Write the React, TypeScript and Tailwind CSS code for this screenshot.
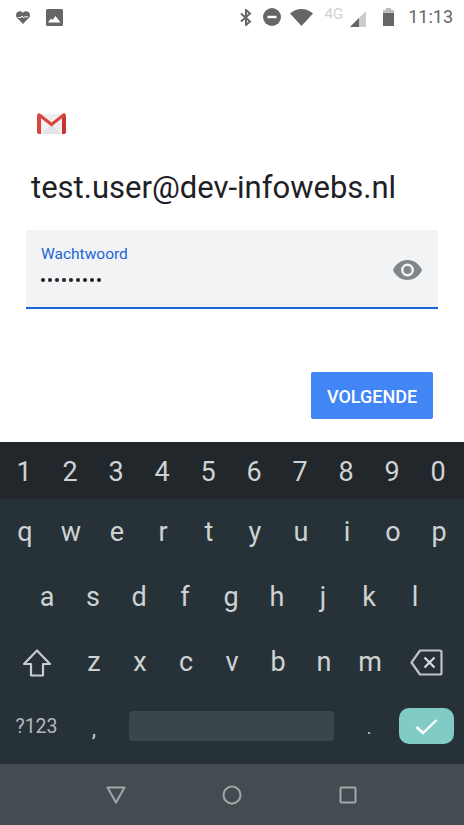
const FONT = "font-['Roboto',sans-serif]";

const rowOne = ['q', 'w', 'e', 'r', 't', 'y', 'u', 'i', 'o', 'p'];
const rowTwo = ['a', 's', 'd', 'f', 'g', 'h', 'j', 'k', 'l'];
const rowThree = ['z', 'x', 'c', 'v', 'b', 'n', 'm'];
const numbers = ['1', '2', '3', '4', '5', '6', '7', '8', '9', '0'];

function StatusBar() {
  return (
    <div className="flex h-[33px] items-center justify-between pl-4 pr-[11px] pt-[1px] text-[#666666]">
      <div className="flex items-center gap-[16px]">
        <svg width="14" height="13" viewBox="0 0 14 13" fill="#666666">
          <path d="M7 13 1 6.8C-.6 5-.2 2 1.8.8 3.6-.3 5.800 0 7 1.800 8.200 0 10.400-.3 12.200.8 14.200 2 14.600 5 13 6.800Z" />
          <path d="M2 6.500h3l1-1.500 1.500 2 1-1.200H12" stroke="#fff" strokeWidth="1" fill="none" />
        </svg>
        <svg width="17" height="17" viewBox="0 0 17 17">
          <rect width="17" height="17" rx="1.500" fill="#666666" />
          <path d="M2 13.500 5 9.500l1.500 1.500L9.500 7l5 6.500Z" fill="#fff" />
        </svg>
      </div>
      <div className="flex items-center">
        <svg width="12" height="17" viewBox="0 0 12 17" fill="none" stroke="#666666" strokeWidth="2">
          <path d="M1 4.500 10 12.500 6 16V1l4 3.500L1 12.500" />
        </svg>
        <svg className="ml-[11px]" width="18" height="18" viewBox="0 0 18 18">
          <circle cx="9" cy="9" r="9" fill="#666666" />
          <rect x="4.500" y="7.800" width="9" height="2.400" fill="#fff" />
        </svg>
        <svg className="ml-[9px]" width="23" height="17" viewBox="0 0 23 17">
          <path d="M0 4.500C3 1.800 7 0 11.500 0S20 1.800 23 4.500L11.500 17Z" fill="#666666" />
        </svg>
        <span className="mb-[6px] ml-[12px] text-[15px] leading-none text-[#d2d2d2]">4G</span>
        <svg className="ml-[7px] mt-[4px]" width="16" height="16" viewBox="0 0 16 16">
          <path d="M0 16 16 0V16Z" fill="#cccccc" />
          <path d="M0 16 9 7V16Z" fill="#666666" />
        </svg>
        <svg className="ml-[17px]" width="11" height="18" viewBox="0 0 11 18">
          <rect x="3" y="0" width="5" height="3" fill="#bdbdbd" />
          <rect x="0" y="2" width="11" height="3" fill="#bdbdbd" />
          <rect x="0" y="5" width="11" height="13" fill="#666666" />
        </svg>
        <span className="ml-[14px] text-[18px] leading-none text-[#666666]">11:13</span>
      </div>
    </div>
  );
}

function GmailLogo() {
  return (
    <svg width="29" height="21" viewBox="0 0 29 21">
      <path d="M1 1h27v19a1 1 0 0 1-1 1H2a1 1 0 0 1-1-1Z" fill="#efefef" />
      <path d="M5 21 14.500 11 24 21Z" fill="#e3e3e3" />
      <path d="M0 2a2 2 0 0 1 3-1.500L14.500 9.500 26 .5A2 2 0 0 1 29 2L14.500 13.500 0 2Z" fill="#d9453c" />
      <path d="M0 2l4 3v16H2a2 2 0 0 1-2-2Z" fill="#d9453c" />
      <path d="M29 2l-4 3v16h2a2 2 0 0 0 2-2Z" fill="#c5362e" />
    </svg>
  );
}

function PasswordField() {
  return (
    <div className="mx-[26px] mt-[24px] flex h-[79px] justify-between border-b-2 border-[#1a66d6] bg-[#f1f3f4] pl-[15px] pr-[16px]">
      <div className="flex flex-col pt-[14px]">
        <span className="text-[15.500px] leading-[20px] text-[#1a66d6]">Wachtwoord</span>
        <div className="mt-[14px] flex gap-[3px]">
          {Array.from({ length: 9 }).map((_, i) => (
            <span key={i} className="size-[4px] rounded-full bg-[#202124]" />
          ))}
        </div>
      </div>
      <svg className="mt-[30px]" width="29" height="20" viewBox="0 0 29 20">
        <path
          fillRule="evenodd"
          fill="#80868b"
          d="M14.500 0C8 0 2.500 4 0 10c2.500 6 8 10 14.500 10S26.500 16 29 10C26.500 4 21 0 14.500 0Zm0 16.500a6.500 6.500 0 1 1 0-13 6.500 6.500 0 0 1 0 13Zm0-2.500a4 4 0 1 0 0-8 4 4 0 0 0 0 8Z"
        />
      </svg>
    </div>
  );
}

function Key({ label }: { label: string }) {
  return <span className="w-[46px] text-center text-[27px] leading-none text-[#cfd2d3]">{label}</span>;
}

function Keyboard() {
  return (
    <div className="flex flex-col bg-[#263238]">
      <div className="flex h-[57px] items-center bg-[#21272b] pl-[1px] pt-[4px]">
        {numbers.map((n) => (
          <Key key={n} label={n} />
        ))}
      </div>
      <div className="flex h-[65px] items-center pl-[2px] pt-[2px]">
        {rowOne.map((k) => (
          <Key key={k} label={k} />
        ))}
      </div>
      <div className="flex h-[66px] items-center pl-[24px]">
        {rowTwo.map((k) => (
          <Key key={k} label={k} />
        ))}
      </div>
      <div className="flex h-[65px] items-center">
        <div className="flex w-[71px] pl-[22px]">
          <svg width="30" height="28" viewBox="0 0 30 28" fill="none" stroke="#c9cbcd" strokeWidth="2.200" strokeLinejoin="round">
            <path d="M15 1.500 28 15h-7v11.500H9V15H2Z" />
          </svg>
        </div>
        {rowThree.map((k) => (
          <Key key={k} label={k} />
        ))}
        <div className="flex pl-[17px]">
          <svg width="33" height="27" viewBox="0 0 33 27" fill="none" stroke="#bfc2c4" strokeWidth="2.200" strokeLinejoin="round">
            <path d="M10 1.500h20a1.500 1.500 0 0 1 1.500 1.500v21a1.500 1.500 0 0 1-1.500 1.500H10L1.500 13.500Z" />
            <path d="M14.500 8.500l10 10m0-10-10 10" stroke="#d9dbdc" />
          </svg>
        </div>
      </div>
      <div className="flex h-[69px] items-center pb-[7px]">
        <span className="mt-[2px] w-[73px] text-center text-[19.500px] leading-none text-[#b4b8ba]">?123</span>
        <span className="mt-[6px] w-[42px] text-center text-[22px] leading-none text-[#c9cccd]">,</span>
        <div className="ml-[14px] h-[30px] w-[205px] rounded-[4px] bg-[#3b464c]" />
        <span className="mt-[4px] w-[65px] pl-[5px] text-center text-[18px] leading-none text-[#c2c5c7]">.</span>
        <div className="flex h-[36px] w-[55px] items-center justify-center rounded-[10px] bg-[#80cbc4]">
          <svg width="23" height="17" viewBox="0 0 23 17" fill="none" stroke="#fff" strokeWidth="2.400">
            <path d="M1.500 9 8 15 21.500 2" />
          </svg>
        </div>
      </div>
      <div className="flex h-[61px] items-center justify-center gap-[96px] bg-[#454c51]">
        <svg width="20" height="18" viewBox="0 0 20 18" fill="none" stroke="#a3a6a8" strokeWidth="2" strokeLinejoin="round">
          <path d="M1.500 1.500h17L10 16.500Z" />
        </svg>
        <svg width="20" height="20" viewBox="0 0 20 20" fill="none" stroke="#a3a6a8" strokeWidth="2">
          <circle cx="10" cy="10" r="8.500" />
        </svg>
        <svg width="20" height="18" viewBox="0 0 20 18" fill="none" stroke="#a3a6a8" strokeWidth="2">
          <rect x="2.500" y="1.500" width="15" height="15" rx="1" />
        </svg>
      </div>
    </div>
  );
}

export default function App() {
  return (
    <div className={`flex h-[825px] w-[464px] flex-col overflow-hidden bg-white ${FONT}`}>
      <StatusBar />
      <div className="flex-1">
        <div className="ml-[37px] mt-[80px] flex h-[21px]">
          <GmailLogo />
        </div>
        <h1 className="ml-[31px] mt-[36px] text-[31px] font-normal leading-[36px] text-[#202124]">test.user@dev-infowebs.nl</h1>
        <PasswordField />
        <div className="mr-[31px] mt-[63px] flex justify-end">
          <button className="flex h-[47px] w-[122px] items-center justify-center rounded-[2px] bg-[#4285f4] pt-[2px] text-[18px] font-medium text-white">
            VOLGENDE
          </button>
        </div>
      </div>
      <Keyboard />
    </div>
  );
}
